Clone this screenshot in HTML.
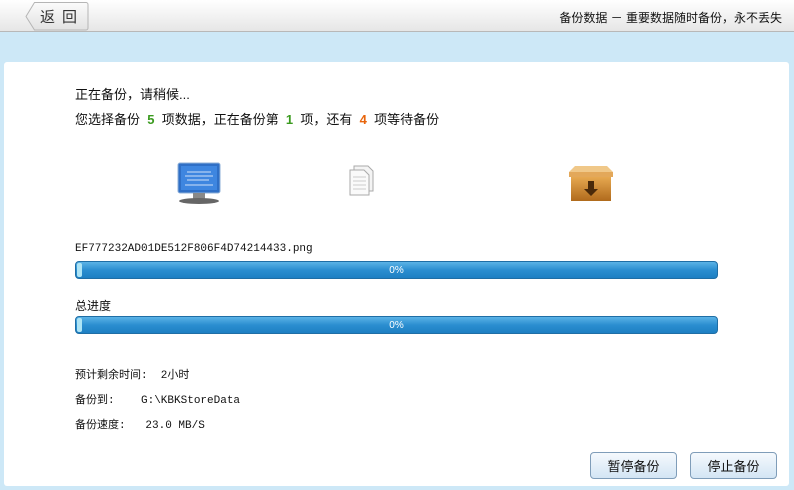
<!DOCTYPE html><html><head><meta charset="utf-8"><style>
body{margin:0;width:794px;height:490px;overflow:hidden;background:#cde8f7;font-family:"Liberation Sans","Noto Sans CJK SC",sans-serif;position:relative}
.hdr{position:absolute;left:0;top:0;width:794px;height:31px;background:linear-gradient(#fff,#e6e6e6);border-bottom:1px solid #b8b8b8}
.back{position:absolute;left:13px;top:1px}
.bt{position:absolute;left:40px;top:6px;font-size:15px;color:#333;letter-spacing:7px}
.t{position:absolute;right:12px;top:9px;font-size:12px;color:#111}
.panel{position:absolute;left:4px;top:62px;width:785px;height:424px;background:#fff;border-radius:3px}
.a{position:absolute;font-size:13px;color:#111;white-space:pre}
.s{position:absolute;font-size:11px;color:#111;font-family:"Liberation Mono","Noto Sans CJK SC",monospace;white-space:pre}
.bar{position:absolute;left:75px;width:643px;height:18px;border:1px solid #1f6ea5;border-radius:4px;background:linear-gradient(#5bb3e6,#2b8ed0 50%,#1d7fc3);color:#fff;font-size:10px;text-align:center;line-height:18px;box-sizing:border-box}
.bar:before{content:"";position:absolute;left:1px;top:1px;width:5px;height:14px;border-radius:2px;background:#aee4f5}
.btn{position:absolute;top:452px;width:87px;height:27px;border:1px solid #7f9db9;border-radius:4px;background:linear-gradient(#f5f9fd,#d3e5f4);font-size:13px;text-align:center;line-height:27px;color:#111;box-sizing:border-box}
</style></head><body>
<div class="hdr"><svg class="back" width="78" height="30"><defs><linearGradient id="bg" x1="0" x2="0" y1="0" y2="1"><stop offset="0" stop-color="#fbfbfb"/><stop offset="1" stop-color="#e2e2e2"/></linearGradient></defs><path d="M21.5 1.5H73a2 2 0 0 1 2 2V27a2 2 0 0 1-2 2H21.5L13 15.5z" fill="url(#bg)" stroke="#b5b5b5"/></svg><div class="bt">返回</div><div class="t">备份数据 － 重要数据随时备份，永不丢失</div></div>
<div class="panel"></div>
<div class="a" style="left:75px;top:84px">正在备份，请稍候...</div>
<div class="a" style="left:75px;top:109px">您选择备份  <b style="color:#3a9a1e">5</b>  项数据，正在备份第  <b style="color:#3a9a1e">1</b>  项，还有  <b style="color:#e8650c">4</b>  项等待备份</div>
<svg style="position:absolute;left:175px;top:162px" width="48" height="44"><rect x="3" y="1" width="42" height="30" rx="2" fill="#2f6fc6" stroke="#8fb0d8"/><rect x="6" y="4" width="36" height="24" fill="#3e86e0"/><g stroke="#cfe0f7" stroke-width="1"><line x1="12" y1="10" x2="36" y2="10"/><line x1="10" y1="14" x2="38" y2="14"/><line x1="12" y1="18" x2="34" y2="18"/><line x1="10" y1="23" x2="38" y2="23"/></g><rect x="18" y="31" width="12" height="6" fill="#888"/><ellipse cx="24" cy="39" rx="20" ry="3" fill="#666"/></svg>
<svg style="position:absolute;left:348px;top:163px" width="32" height="34"><path d="M6 3h14l5 5v20H6z" fill="#f4f4f4" stroke="#aaa"/><path d="M2 7h14l5 5v20H2z" fill="#fafafa" stroke="#aaa"/><g stroke="#ccc"><line x1="5" y1="14" x2="18" y2="14"/><line x1="5" y1="18" x2="18" y2="18"/><line x1="5" y1="22" x2="18" y2="22"/><line x1="5" y1="26" x2="18" y2="26"/></g></svg>
<svg style="position:absolute;left:567px;top:164px" width="48" height="40"><path d="M2 8l6-6h32l6 6z" fill="#f0c889"/><rect x="2" y="8" width="44" height="5" fill="#e3a85a"/><defs><linearGradient id="g" x1="0" x2="0" y1="0" y2="1"><stop offset="0" stop-color="#e6a850"/><stop offset="1" stop-color="#b06a1c"/></linearGradient></defs><rect x="4" y="13" width="40" height="24" fill="url(#g)"/><path d="M21 17h6v8h4l-7 7-7-7h4z" fill="#4a2a0a"/></svg>
<div class="s" style="left:75px;top:243px">EF777232AD01DE512F806F4D74214433.png</div>
<div class="bar" style="top:261px">0%</div>
<div class="a" style="left:75px;top:297px;font-size:12px">总进度</div>
<div class="bar" style="top:316px">0%</div>
<div class="s" style="left:75px;top:366px">预计剩余时间:  2小时</div>
<div class="s" style="left:75px;top:391px">备份到:    G:\KBKStoreData</div>
<div class="s" style="left:75px;top:416px">备份速度:   23.0 MB/S</div>
<div class="btn" style="left:590px">暂停备份</div>
<div class="btn" style="left:690px">停止备份</div>
</body></html>
